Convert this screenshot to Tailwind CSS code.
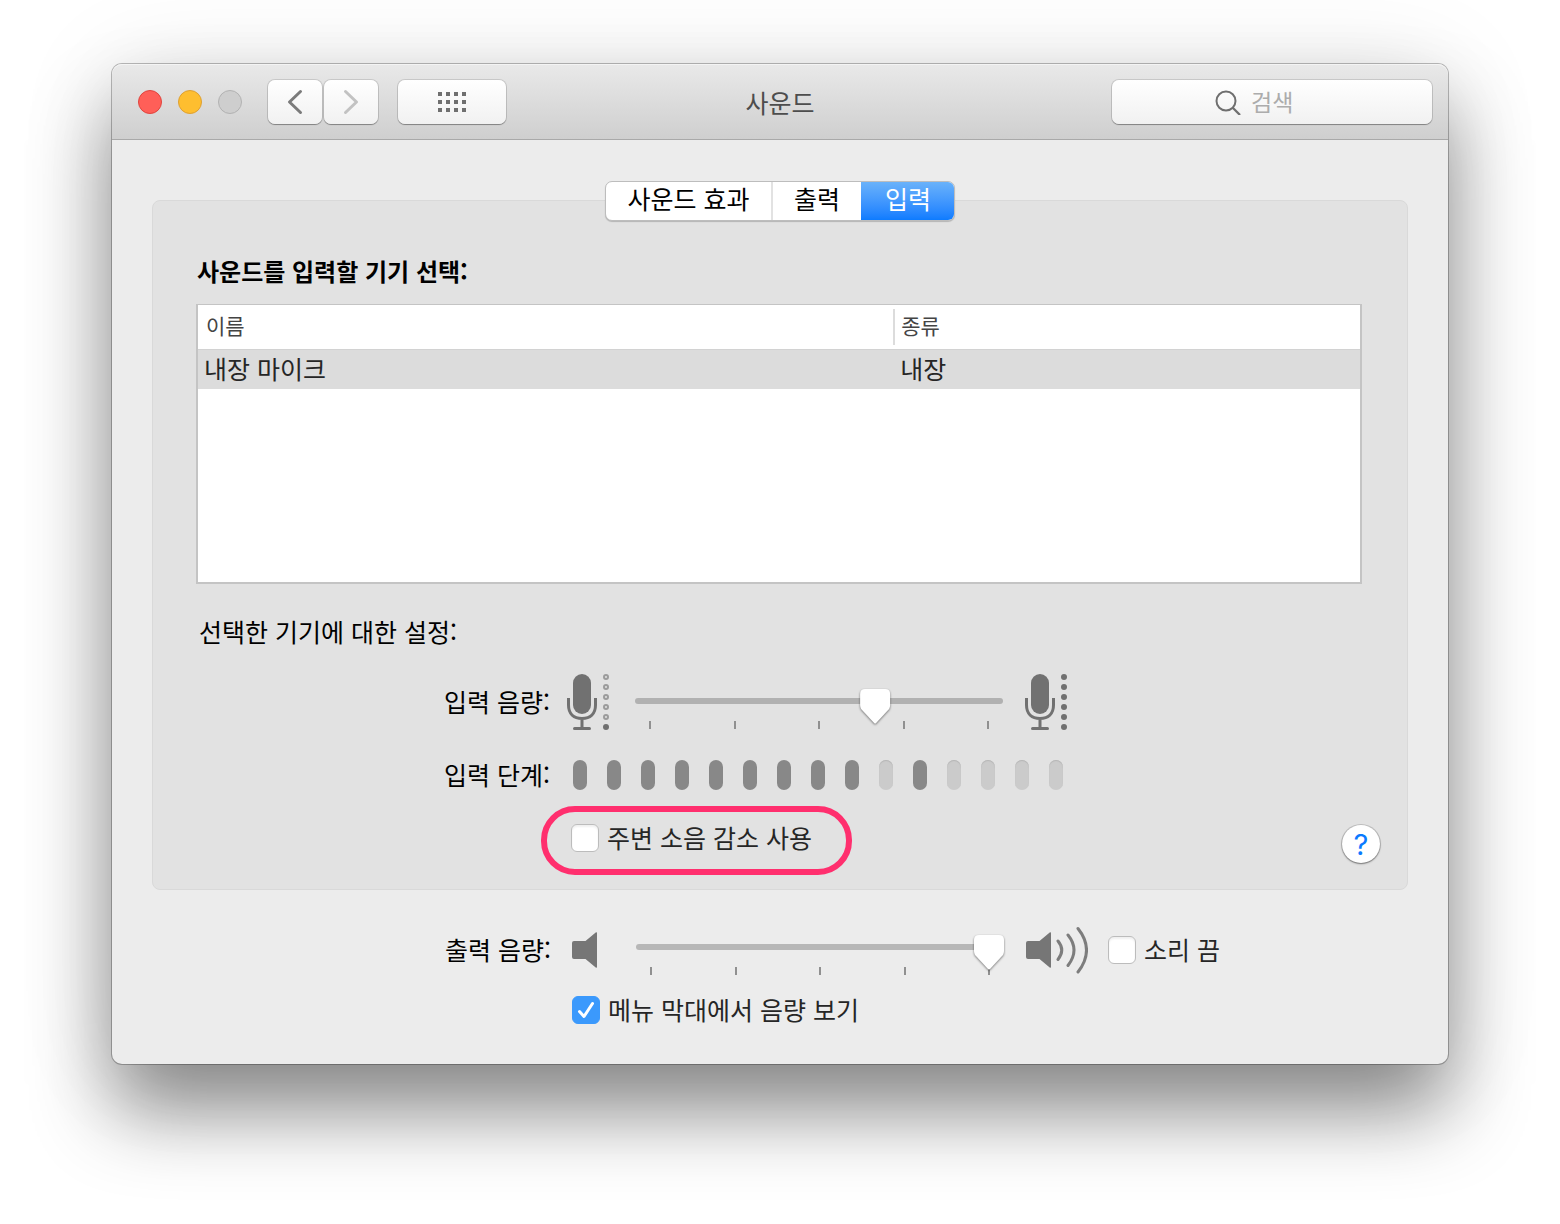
<!DOCTYPE html>
<html lang="ko">
<head>
<meta charset="utf-8">
<meta name="viewport" content="width=device-width, initial-scale=1">
<title>사운드</title>
<script src="https://cdn.jsdelivr.net/npm/@tailwindcss/browser@4"></script>
</head>
<body class="min-h-screen overflow-x-hidden bg-white px-28 pt-16 pb-40 font-['Noto_Sans_CJK_KR',sans-serif] text-[25px] leading-10 text-black">
<svg class="hidden" aria-hidden="true">
  <symbol id="mic" viewBox="0 0 30 56">
    <rect x="6" y="0" width="18" height="40" rx="9" fill="#717171"/>
    <path d="M1.5 24V31C1.5 40 7 44.500 15 44.500S28.500 40 28.500 31V24M15 44.500V54" fill="none" stroke="#717171" stroke-width="3"/>
    <path d="M7.500 54.500H22.500" stroke="#717171" stroke-width="3" stroke-linecap="round"/>
  </symbol>
  <symbol id="speaker" viewBox="0 0 26 36">
    <path d="M2 9H13.500L24 .3Q25 0 25 1V35Q25 36 24 35.700L13.500 27H2Q0 27 0 25V11Q0 9 2 9Z" fill="#767676"/>
  </symbol>
</svg>

<main class="rounded-[10px] bg-[#ececec] shadow-[0_0_0_1px_rgba(0,0,0,0.26),0_48px_80px_rgba(0,0,0,0.44),0_4px_100px_rgba(0,0,0,0.1)]">
  <header class="grid h-[76px] grid-cols-[1fr_auto_1fr] items-center rounded-t-[10px] border-b border-[#a9a9a9] bg-linear-to-b from-[#e9e9e9] to-[#cfcfcf] px-4 shadow-[inset_0_1px_0_#f4f4f4]">
    <div class="flex items-center pl-[10px]">
      <div class="flex gap-4">
        <button type="button" aria-label="닫기" class="size-6 rounded-full border border-[#e0443e] bg-[#ff5f58]"></button>
        <button type="button" aria-label="최소화" class="size-6 rounded-full border border-[#dea032] bg-[#febe2f]"></button>
        <button type="button" aria-label="확대" disabled class="size-6 rounded-full border border-[#b2b2b2] bg-[#cecece]"></button>
      </div>
      <div class="ml-[26px] flex gap-[2px]">
        <button type="button" aria-label="뒤로" class="flex h-[44px] w-[54px] items-center justify-center rounded-[7px] bg-linear-to-b from-white to-[#f1f1f1] shadow-[0_0_0_1px_rgba(0,0,0,0.12),0_1px_1px_rgba(0,0,0,0.3)]">
          <svg width="16" height="26" viewBox="0 0 16 26" fill="none" stroke="#7b7b7b" stroke-width="3" stroke-linecap="round" stroke-linejoin="round"><path d="M13.500 2.500L2.500 13L13.500 23.500"/></svg>
        </button>
        <button type="button" aria-label="앞으로" disabled class="flex h-[44px] w-[54px] items-center justify-center rounded-[7px] bg-linear-to-b from-white to-[#f1f1f1] shadow-[0_0_0_1px_rgba(0,0,0,0.12),0_1px_1px_rgba(0,0,0,0.3)]">
          <svg width="16" height="26" viewBox="0 0 16 26" fill="none" stroke="#c2c2c2" stroke-width="3" stroke-linecap="round" stroke-linejoin="round"><path d="M2.500 2.500L13.500 13L2.500 23.500"/></svg>
        </button>
      </div>
      <button type="button" aria-label="모두 보기" class="ml-5 flex h-[44px] w-[108px] items-center justify-center rounded-[7px] bg-linear-to-b from-white to-[#f1f1f1] shadow-[0_0_0_1px_rgba(0,0,0,0.12),0_1px_1px_rgba(0,0,0,0.3)]">
        <svg width="28" height="20" viewBox="0 0 28 20" stroke="#6f6f6f" stroke-width="4" stroke-dasharray="4 4"><path d="M0 2H28M0 10H28M0 18H28"/></svg>
      </button>
    </div>
    <h1 class="text-[#4d4d4d]">사운드</h1>
    <label class="flex h-[44px] w-[320px] items-center gap-[10px] justify-self-end rounded-[7px] bg-linear-to-b from-white to-[#f1f1f1] pl-[103px] shadow-[0_0_0_1px_rgba(0,0,0,0.12),0_1px_1px_rgba(0,0,0,0.3)]">
      <svg class="shrink-0" width="26" height="26" viewBox="0 0 26 26" fill="none" stroke="#6f6f6f" stroke-width="2"><circle cx="11" cy="12" r="9.500"/><path d="M17.500 18.500L25 26" stroke-width="2.300"/></svg>
      <input type="search" placeholder="검색" aria-label="검색" class="h-full w-full min-w-0 bg-transparent pb-[2px] text-[23px] outline-none placeholder:text-[#acacac]">
    </label>
  </header>

  <div class="px-10 pt-[41px] pb-10">
    <div class="relative z-10 mx-auto -mb-[21px] flex h-10 w-[350px] overflow-hidden rounded-[7px] border border-[#bdbdbd] bg-white shadow-[0_1px_1px_rgba(0,0,0,0.2)]" role="tablist">
      <button type="button" role="tab" aria-selected="false" class="flex w-[167px] items-center justify-center border-r-2 border-[#e2e2e2] pb-[6px]">사운드 효과</button>
      <button type="button" role="tab" aria-selected="false" class="flex w-[88px] items-center justify-center pb-[6px]">출력</button>
      <button type="button" role="tab" aria-selected="true" class="-my-px -mr-px flex flex-1 items-center justify-center bg-linear-to-b from-[#6bb3fa] to-[#067aff] pb-[6px] text-white">입력</button>
    </div>

    <section class="flex flex-col rounded-lg border border-[#d9d9d9] bg-[#e2e2e2] pt-[51px] pr-[45px] pb-[26px] pl-[43px]">
      <h2 class="pb-[2px] pl-px text-[24px] leading-[38px] font-bold">사운드를 입력할 기기 선택:</h2>
      <div class="mt-3 h-[280px] w-full border-2 border-t border-[#c4c4c4] bg-white">
        <table class="w-full table-fixed border-collapse text-left">
          <colgroup><col class="w-[60%]"><col></colgroup>
          <thead>
            <tr class="h-11 text-[21px] leading-8 text-[#444]">
              <th scope="col" class="py-1 pl-2 font-normal"><span class="block border-r-2 border-[#dcdcdc] pb-1">이름</span></th>
              <th scope="col" class="py-1 pl-[6px] font-normal"><span class="block pb-1">종류</span></th>
            </tr>
          </thead>
          <tbody>
            <tr class="h-[39px] border-t border-[#d2d2d2] bg-[#dcdcdc] leading-9 text-[#262626]">
              <td class="pb-[2px] pl-[6px]">내장 마이크</td>
              <td class="pb-[2px] pl-[5px]">내장</td>
            </tr>
          </tbody>
        </table>
      </div>

      <h3 class="mt-7 pb-[2px] pl-[3px] leading-[38px]">선택한 기기에 대한 설정:</h3>

      <div class="mt-5 w-[878px] self-center">
        <div class="grid h-[60px] grid-cols-[210px_85px_368px_1fr] items-center">
          <label for="input-volume" class="pb-[3px] text-right">입력 음량:</label>
          <div class="flex gap-[6px] pl-[17px]">
            <svg width="30" height="56"><use href="#mic"/></svg>
            <svg width="6" height="56" fill="none" stroke="#9c9c9c" stroke-width="2"><circle cx="3" cy="3" r="2"/><circle cx="3" cy="13" r="2"/><circle cx="3" cy="23" r="2"/><circle cx="3" cy="33" r="2"/><circle cx="3" cy="43" r="2"/><circle cx="3" cy="53" r="3" fill="#717171" stroke="none"/></svg>
          </div>
          <div class="relative self-start pt-[17px]">
            <div class="absolute inset-x-0 top-[26px] h-[6px] rounded-full bg-[#b1b1b1]"></div>
            <div class="h-8"></div>
            <div class="flex h-2 justify-between px-[14px]"><i class="w-[2px] bg-[#909090]"></i><i class="w-[2px] bg-[#909090]"></i><i class="w-[2px] bg-[#909090]"></i><i class="w-[2px] bg-[#909090]"></i><i class="w-[2px] bg-[#909090]"></i></div>
            <input id="input-volume" type="range" min="0" max="1000" value="667" class="absolute inset-x-0 top-[17px] h-9 w-full appearance-none bg-transparent drop-shadow-[0_1px_1px_rgba(0,0,0,0.5)] [&::-webkit-slider-thumb]:h-9 [&::-webkit-slider-thumb]:w-8 [&::-webkit-slider-thumb]:appearance-none [&::-webkit-slider-thumb]:bg-white [&::-webkit-slider-thumb]:[clip-path:path('M6_0H26Q31_0_31_5V16Q31_18_30_20L17_34Q16_35_15_34L2_20Q1_18_1_16V5Q1_0_6_0Z')]">
          </div>
          <div class="flex gap-[6px] pl-[22px]">
            <svg width="30" height="56"><use href="#mic"/></svg>
            <svg width="6" height="56" fill="#717171"><circle cx="3" cy="3" r="3"/><circle cx="3" cy="13" r="3"/><circle cx="3" cy="23" r="3"/><circle cx="3" cy="33" r="3"/><circle cx="3" cy="43" r="3"/><circle cx="3" cy="53" r="3"/></svg>
          </div>
        </div>

        <div class="mt-6 flex h-[38px] items-center">
          <span id="level-label" class="w-[210px] pb-[3px] text-right">입력 단계:</span>
          <div role="meter" aria-labelledby="level-label" aria-valuemin="0" aria-valuemax="15" aria-valuenow="9" class="flex gap-5 pl-[23px]">
            <i class="h-[30px] w-[14px] rounded-full bg-[#888]"></i>
            <i class="h-[30px] w-[14px] rounded-full bg-[#888]"></i>
            <i class="h-[30px] w-[14px] rounded-full bg-[#888]"></i>
            <i class="h-[30px] w-[14px] rounded-full bg-[#888]"></i>
            <i class="h-[30px] w-[14px] rounded-full bg-[#888]"></i>
            <i class="h-[30px] w-[14px] rounded-full bg-[#888]"></i>
            <i class="h-[30px] w-[14px] rounded-full bg-[#888]"></i>
            <i class="h-[30px] w-[14px] rounded-full bg-[#888]"></i>
            <i class="h-[30px] w-[14px] rounded-full bg-[#888]"></i>
            <i class="h-[30px] w-[14px] rounded-full bg-[#cbcbcb] shadow-[inset_0_1px_1px_#b5b5b5]"></i>
            <i class="h-[30px] w-[14px] rounded-full bg-[#888]"></i>
            <i class="h-[30px] w-[14px] rounded-full bg-[#cbcbcb] shadow-[inset_0_1px_1px_#b5b5b5]"></i>
            <i class="h-[30px] w-[14px] rounded-full bg-[#cbcbcb] shadow-[inset_0_1px_1px_#b5b5b5]"></i>
            <i class="h-[30px] w-[14px] rounded-full bg-[#cbcbcb] shadow-[inset_0_1px_1px_#b5b5b5]"></i>
            <i class="h-[30px] w-[14px] rounded-full bg-[#cbcbcb] shadow-[inset_0_1px_1px_#b5b5b5]"></i>
          </div>
        </div>

        <div class="mt-[30px] flex h-7 pl-[231px]">
          <label class="relative flex items-center gap-2 text-[#262626]">
            <input type="checkbox" class="size-7 appearance-none rounded-md border border-[#bcbcbc] bg-white shadow-[inset_0_2px_2px_#f0f0f0]">
            <span class="pb-[3px]">주변 소음 감소 사용</span>
            <span class="pointer-events-none absolute -top-[18px] -right-10 -bottom-[23px] -left-[30px] rounded-[34px] border-6 border-[#ff2f6e]"></span>
          </label>
        </div>
      </div>

      <button type="button" aria-label="도움말" class="-mt-[27px] -mr-[18px] flex size-[38px] items-center justify-center self-end rounded-full bg-white pt-px font-['Inter',sans-serif] text-[29px] text-[#0a7aff] shadow-[0_0_0_1px_rgba(0,0,0,0.15),0_1px_2px_rgba(0,0,0,0.4)]">?</button>
    </section>

    <div class="mx-auto mt-[30px] w-[878px]">
      <div class="grid h-[60px] grid-cols-[210px_85px_368px_1fr] items-center">
        <label for="output-volume" class="pb-[3px] text-right">출력 음량:</label>
        <div class="pl-[21px]"><svg width="26" height="36"><use href="#speaker"/></svg></div>
        <div class="relative self-start pt-[15px]">
          <div class="absolute inset-x-0 top-6 h-[6px] rounded-full bg-[#b7b7b7]"></div>
          <div class="h-8"></div>
          <div class="flex h-2 justify-between px-[14px]"><i class="w-[2px] bg-[#909090]"></i><i class="w-[2px] bg-[#909090]"></i><i class="w-[2px] bg-[#909090]"></i><i class="w-[2px] bg-[#909090]"></i><i class="w-[2px] bg-[#909090]"></i></div>
          <input id="output-volume" type="range" min="0" max="1000" value="1000" class="absolute top-[15px] left-0 h-9 w-[369px] appearance-none bg-transparent drop-shadow-[0_1px_1px_rgba(0,0,0,0.5)] [&::-webkit-slider-thumb]:h-9 [&::-webkit-slider-thumb]:w-8 [&::-webkit-slider-thumb]:appearance-none [&::-webkit-slider-thumb]:bg-white [&::-webkit-slider-thumb]:[clip-path:path('M6_0H26Q31_0_31_5V16Q31_18_30_20L17_34Q16_35_15_34L2_20Q1_18_1_16V5Q1_0_6_0Z')]">
        </div>
        <div class="flex items-center pl-[22px]">
          <svg width="26" height="36"><use href="#speaker"/></svg>
          <svg class="mr-5 ml-1" width="32" height="48" viewBox="0 0 32 48" fill="none" stroke="#7d7d7d" stroke-width="3" stroke-linecap="round"><path d="M2 15Q9.500 24 2 33.500M12 9Q24 24 12 39.500M22 2.500Q39 24 22 46"/></svg>
          <label class="flex items-center gap-2 whitespace-nowrap text-[#262626]">
            <input type="checkbox" class="size-7 appearance-none rounded-md border border-[#bcbcbc] bg-white shadow-[inset_0_2px_2px_#f0f0f0]">
            <span class="pb-[3px]">소리 끔</span>
          </label>
        </div>
      </div>
      <div class="mt-4 flex h-7 pl-[231px]">
        <label class="flex items-center gap-2 text-[#262626]">
          <span class="grid size-7 *:col-start-1 *:row-start-1">
            <input type="checkbox" checked class="peer size-7 appearance-none rounded-md border border-[#bcbcbc] bg-white checked:border-[#3b99fc] checked:bg-[#3b99fc]">
            <svg class="pointer-events-none hidden peer-checked:block" width="28" height="28" viewBox="0 0 28 28" fill="none" stroke="#fff" stroke-width="3" stroke-linecap="round" stroke-linejoin="round"><path d="M7.500 15.500L12 20.500L20.500 7.500"/></svg>
          </span>
          <span class="pb-[3px]">메뉴 막대에서 음량 보기</span>
        </label>
      </div>
    </div>
  </div>
</main>
</body>
</html>
